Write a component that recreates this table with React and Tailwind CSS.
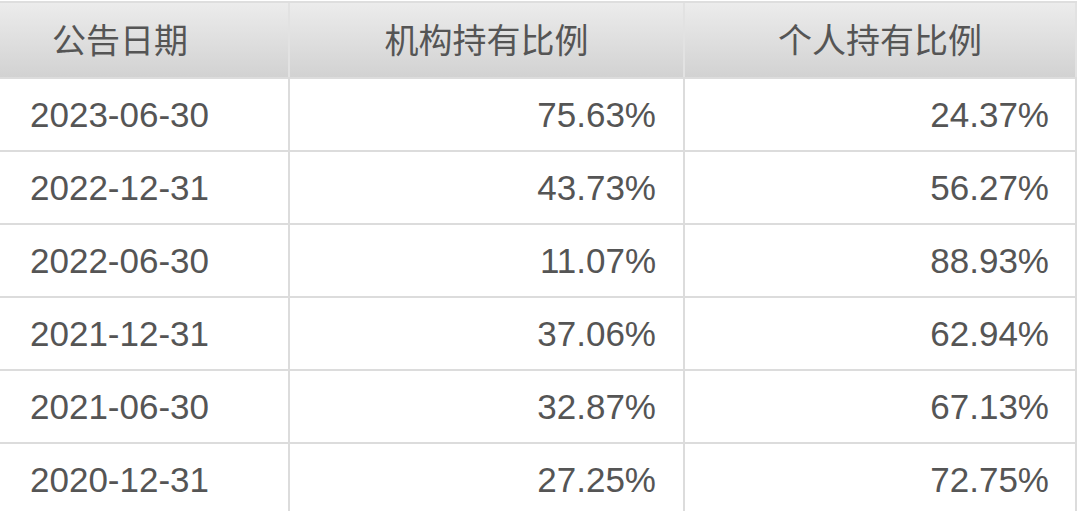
import React from "react";

const rows = [
  ["2023-06-30", "75.63%", "24.37%"],
  ["2022-12-31", "43.73%", "56.27%"],
  ["2022-06-30", "11.07%", "88.93%"],
  ["2021-12-31", "37.06%", "62.94%"],
  ["2021-06-30", "32.87%", "67.13%"],
  ["2020-12-31", "27.25%", "72.75%"],
];

export default function App() {
  return (
    <div className="w-[1080px] h-[511px] overflow-hidden bg-white pt-px text-[#555555]">
      <div className="w-[1077px] border-t-2 border-[#dedede]">
        <div
          className="flex h-[76px] border-b-2 border-[#dcdcdc] bg-gradient-to-b from-[#ececec] to-[#d2d2d2] text-[34px]"
          style={{ fontFamily: '"Noto Sans CJK SC", "Noto Sans", sans-serif' }}
        >
          <div className="w-[290px] border-r-2 border-[#e2e2e2] flex items-center pl-[52px] pb-[3px]">公告日期</div>
          <div className="w-[395px] border-r-2 border-[#e2e2e2] flex items-center justify-center pb-[3px]">机构持有比例</div>
          <div className="flex-1 border-r-2 border-[#e2e2e2] flex items-center justify-center pb-[3px]">个人持有比例</div>
        </div>
        {rows.map((r, i) => (
          <div
            key={i}
            className="flex h-[73px] border-b-2 border-[#dcdcdc] text-[35px]"
            style={{ fontFamily: '"Liberation Sans", Arial, sans-serif' }}
          >
            <div className="w-[290px] border-r-2 border-[#dcdcdc] flex items-center pl-[30px] pt-[2px]">{r[0]}</div>
            <div className="w-[395px] border-r-2 border-[#dcdcdc] flex items-center justify-end pr-[27px] pt-[2px]">{r[1]}</div>
            <div className="flex-1 border-r-2 border-[#dcdcdc] flex items-center justify-end pr-[26px] pt-[2px]">{r[2]}</div>
          </div>
        ))}
      </div>
    </div>
  );
}
